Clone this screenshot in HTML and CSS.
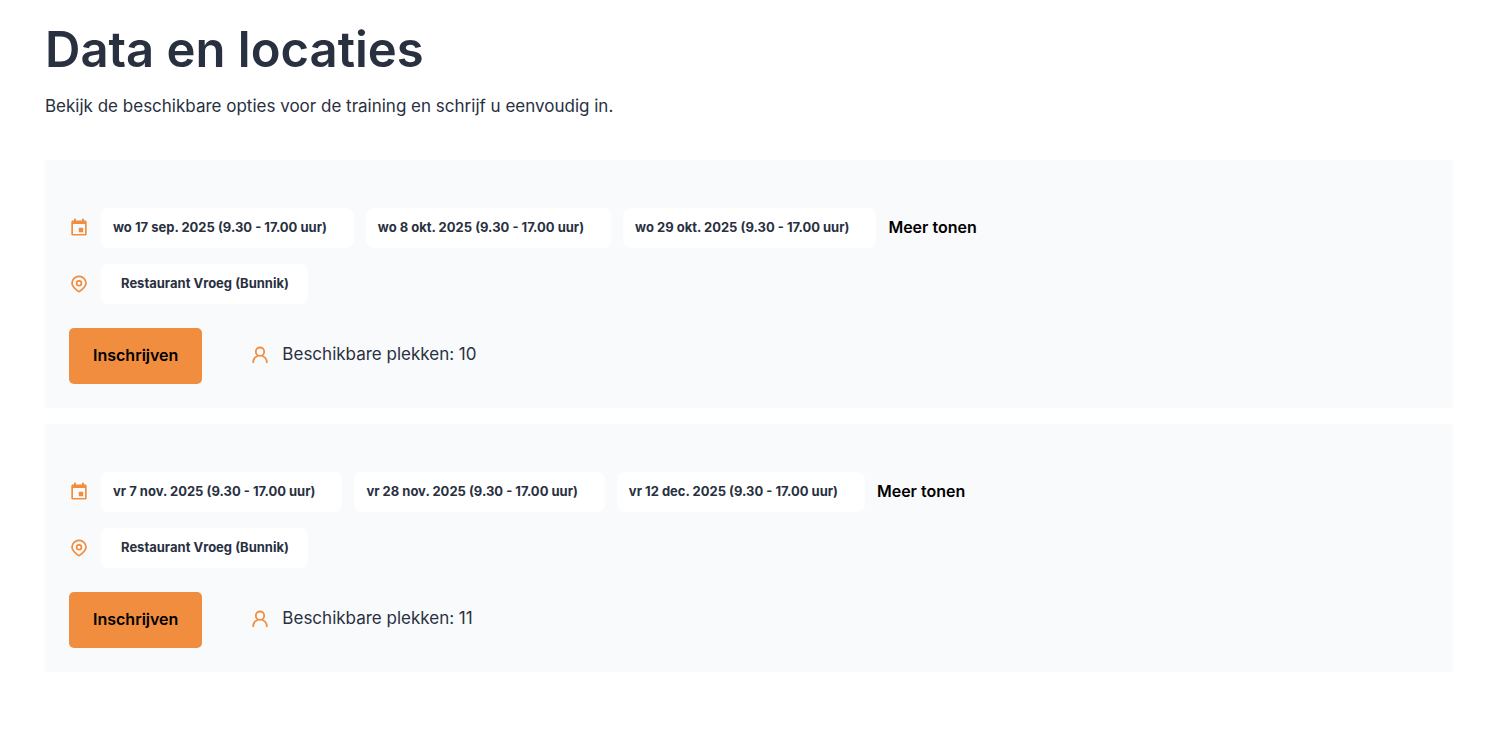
FILE: index.html
```html
<!DOCTYPE html>
<html lang="nl">
<head>
  <meta charset="UTF-8">
  <meta name="viewport" content="width=device-width, initial-scale=1.0">
  <title>Data en locaties</title>
  <link rel="stylesheet" href="styles.css">
</head>
<body>

  <!-- Iconen die in elke kaart terugkomen -->
  <svg class="icon-defs" aria-hidden="true">
    <symbol id="icon-calendar" viewBox="0 0 20 20">
      <path fill="currentColor" fill-rule="evenodd" d="M5 .8h2v1.600h6V.8h2v1.600h1.100c1 0 1.600.6 1.600 1.600v12c0 1-.6 1.600-1.600 1.600H3.900c-1 0-1.600-.6-1.600-1.600V4c0-1 .6-1.600 1.600-1.600H5zM4 6v10h12V6zM9.800 9.800h4.400v4.400H9.800z"/>
    </symbol>
    <symbol id="icon-pin" viewBox="0 0 20 20">
      <path fill="none" stroke="currentColor" stroke-width="1.700" stroke-linejoin="round" d="M10 17.700C7 15.500 3 13 3 9.200a7 6.900 0 0 1 14 0c0 3.800-4 6.300-7 8.500z"/>
      <circle cx="10" cy="9.200" r="2.400" fill="none" stroke="currentColor" stroke-width="1.700"/>
    </symbol>
    <symbol id="icon-user" viewBox="0 0 20 20">
      <circle cx="10" cy="6.700" r="4.200" fill="none" stroke="currentColor" stroke-width="1.800"/>
      <path fill="none" stroke="currentColor" stroke-width="1.800" stroke-linecap="round" d="M3.200 17.300a6.800 6.800 0 0 1 4.300-6.300M16.800 17.300a6.800 6.800 0 0 0-4.300-6.300"/>
    </symbol>
  </svg>

  <main class="page">
    <h1>Data en locaties</h1>
    <p class="intro">Bekijk de beschikbare opties voor de training en schrijf u eenvoudig in.</p>

    <div class="trainings">
      <section class="training">
        <!-- Data -->
        <div class="row">
          <svg class="icon" aria-hidden="true"><use href="#icon-calendar"/></svg>
          <span class="chip">wo 17 sep. 2025 (9.30 - 17.00 uur)</span>
          <span class="chip">wo 8 okt. 2025 (9.30 - 17.00 uur)</span>
          <span class="chip">wo 29 okt. 2025 (9.30 - 17.00 uur)</span>
          <button type="button" class="more">Meer tonen</button>
        </div>
        <!-- Locatie -->
        <div class="row">
          <svg class="icon" aria-hidden="true"><use href="#icon-pin"/></svg>
          <span class="chip location">Restaurant Vroeg (Bunnik)</span>
        </div>
        <div class="actions">
          <button type="button" class="signup">Inschrijven</button>
          <div class="places">
            <svg class="icon" aria-hidden="true"><use href="#icon-user"/></svg>
            <span class="places-text">Beschikbare plekken: 10</span>
          </div>
        </div>
      </section>

      <section class="training">
        <!-- Data -->
        <div class="row">
          <svg class="icon" aria-hidden="true"><use href="#icon-calendar"/></svg>
          <span class="chip">vr 7 nov. 2025 (9.30 - 17.00 uur)</span>
          <span class="chip">vr 28 nov. 2025 (9.30 - 17.00 uur)</span>
          <span class="chip">vr 12 dec. 2025 (9.30 - 17.00 uur)</span>
          <button type="button" class="more">Meer tonen</button>
        </div>
        <!-- Locatie -->
        <div class="row">
          <svg class="icon" aria-hidden="true"><use href="#icon-pin"/></svg>
          <span class="chip location">Restaurant Vroeg (Bunnik)</span>
        </div>
        <div class="actions">
          <button type="button" class="signup">Inschrijven</button>
          <div class="places">
            <svg class="icon" aria-hidden="true"><use href="#icon-user"/></svg>
            <span class="places-text">Beschikbare plekken: 11</span>
          </div>
        </div>
      </section>
    </div>
  </main>

</body>
</html>
```
FILE: styles.css
```css
* {
  box-sizing: border-box;
}
body {
  margin: 0;
  background-color: #ffffff;
  color: #29303f;
  font-family: Inter, "Liberation Sans", sans-serif;
  font-size: 17px;
  line-height: 24px;
}
.icon-defs {
  display: none;
}
.page {
  padding: 20px 57px 40px 45px;
}
h1 {
  margin: 0 0 14px;
  font-size: 49px;
  line-height: 60px;
  font-weight: 600;
}
.intro {
  margin: 0 0 42px;
}
.trainings {
  display: flex;
  flex-direction: column;
  gap: 16px;
}
.training {
  padding: 48px 24px 24px;
  background-color: #f9fafc;
}
.row {
  display: flex;
  flex-wrap: wrap;
  align-items: center;
  gap: 12px;
  margin-bottom: 16px;
}
.icon {
  width: 20px;
  height: 20px;
  flex-shrink: 0;
  color: #f18d3f;
}
.chip {
  padding: 7px 27px 9px 12px;
  background-color: #ffffff;
  border-radius: 8px;
  font-size: 13px;
  font-weight: 700;
}
.chip.location {
  padding-left: 20px;
  padding-right: 19px;
}
button {
  border: none;
  color: #000000;
  font-family: inherit;
  font-size: 16px;
  line-height: 24px;
  font-weight: 600;
  cursor: pointer;
}
.more {
  padding: 0 0 2px;
  background: none;
}
.actions {
  display: flex;
  align-items: center;
  gap: 48px;
  margin-top: 24px;
}
.signup {
  padding: 15px 24px 17px;
  background-color: #f18d3f;
  border-radius: 5px;
}
.places {
  display: flex;
  align-items: center;
  gap: 12px;
  padding-bottom: 2px;
}
.places-text {
  padding-bottom: 2px;
}
```
